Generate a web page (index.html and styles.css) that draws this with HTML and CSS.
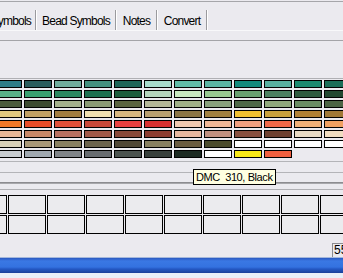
FILE: index.html
```html
<!DOCTYPE html>
<html lang="en">
<head>
  <meta charset="UTF-8" />
  <title>Palette</title>
  <link rel="stylesheet" href="styles.css">
</head>
<body>

<div class="win">
  <div class="line-top"></div>
  <div class="tabs">
    <div class="tab tab-sym">Symbols</div>
    <div class="tab tab-bead">Bead Symbols</div>
    <div class="tab tab-notes">Notes</div>
    <div class="tab tab-conv">Convert</div>
  </div>
  <div class="rule rule-light"></div>
  <div class="rule rule-tool"></div>
  <div class="rule rule-pal"></div>

  <div class="palette" id="palette"></div>

  <div class="rule rule-a"></div>
  <div class="rule rule-b"></div>
  <div class="rule rule-c"></div>
  <div class="rule rule-d"></div>

  <div class="boxes" id="boxes"></div>

  <div class="status">
    <span class="field">55</span>
  </div>
  <div class="taskbar"></div>
  <div class="desk"></div>

  <div class="tooltip">DMC&nbsp; 310, Black</div>
</div>

<script>
  const COLORS = [
    ["#2e7c88","#2a5c5c","#70ac9c","#44907e","#1f6658","#a8dccc","#62bca8","#5ab4a2","#138a7c","#58b0a0","#1c8a70","#1b6e58"],
    ["#58b088","#38a070","#2c8860","#1c7050","#1c5c3c","#b4d4bc","#c8e8c0","#98c890","#68a070","#4c8060","#2e5a3e","#224830"],
    ["#4a5a3c","#3c4a30","#a4b08c","#8a9a74","#5a6440","#b4b898","#a0b088","#88a07c","#4e6848","#90a87c","#6a8c64","#4c6444"],
    ["#e0c880","#c0a064","#a07c40","#f0e0b0","#d8b880","#b8a070","#8a7444","#a08040","#f0c030","#c8a03c","#b08034","#a07836"],
    ["#f07828","#e84c28","#e05038","#c84838","#e84040","#d83030","#f0c8b0","#f0b898","#f0a080","#f06848","#f0b078","#f0a060"],
    ["#e8b898","#c88868","#b87060","#a05848","#884838","#8c3c30","#e8b8a0","#c09080","#885040","#6e4030","#e8dac4","#f0dcc0"],
    ["#d8d0b8","#a89878","#888060","#6c644c","#504836","#888060","#6a5c40","#4a4a2c","#ffffff","#ffffff","#ffffff","#ffffff"],
    ["#c8ccd0","#a0a8b0","#808488","#686c70","#4c5450","#38403c","sel","#ffffff","#f8e818","#f06040",null,null]
  ];

  const palette = document.getElementById("palette");
  COLORS.forEach(row => {
    row.forEach(color => {
      const cell = document.createElement("div");
      if (color === null) {
        cell.className = "swatch empty";
      } else if (color === "sel") {
        cell.className = "swatch selected";
      } else {
        cell.className = "swatch";
        cell.style.background = color;
      }
      palette.appendChild(cell);
    });
  });

  const boxes = document.getElementById("boxes");
  for (let i = 0; i < 20; i++) {
    const box = document.createElement("div");
    box.className = "box";
    boxes.appendChild(box);
  }
</script>

</body>
</html>
```

FILE: styles.css
```css
body {
  margin: 0;
  background: #ebeaef;
  font-family: "Liberation Sans", Arial, sans-serif;
  font-size: 11px;
  color: #000;
  overflow: hidden;
}
.win {
  position: relative;
  width: 343px;
  height: 278px;
  overflow: hidden;
}
.line-top {
  height: 1px;
  margin-top: 1px;
  background: #a6a6aa;
}
.tabs {
  display: flex;
  margin: 8px 0 0 -30px;
  height: 20px;
}
.tab {
  line-height: 20px;
  padding-top: 1px;
  box-sizing: border-box;
  text-align: center;
  font-size: 12px;
  letter-spacing: -0.8px;
  border-right: 1px solid #9a9a9e;
  box-shadow: 1px 0 0 #ffffff;
}
.tab-sym { width: 66px; text-align: right; padding-right: 4px; }
.tab-bead { width: 80px; padding-left: 1px; }
.tab-notes { width: 41px; padding-left: 1px; }
.tab-conv { width: 50px; padding-left: 1px; }

.rule {
  height: 1px;
}
.rule-light {
  background: #f8f8fa;
}
.rule-tool {
  margin-top: 9px;
  background: #a4a4a8;
}
.rule-pal {
  margin-top: 37px;
  background: #b0b0b4;
}
.palette {
  display: grid;
  grid-template-columns: repeat(12, 28px);
  grid-auto-rows: 8px;
  gap: 2px;
  margin: 1px 0 0 -6px;
}
.swatch {
  border: 1px solid #000;
  box-sizing: border-box;
}
.swatch.empty {
  border: none;
}
.swatch.selected {
  background: #1c2a22;
}
.rule-a {
  margin-top: 3px;
  background: #b4b4b8;
}
.rule-b {
  margin-top: 10px;
  background: #b4b4b8;
}
.rule-c {
  margin-top: 9px;
  height: 2px;
  background: linear-gradient(#8c8c90 0 1px, #a8a8ac 1px);
}
.rule-d {
  margin-top: 5px;
  background: #b0b0b4;
}
.boxes {
  display: grid;
  grid-template-columns: repeat(10, 38px);
  grid-auto-rows: 19px;
  gap: 1px;
  margin: 5px 0 0 -31px;
}
.box {
  border: 1px solid #000;
  box-sizing: border-box;
  background: #ebebee;
}
.status {
  display: flex;
  justify-content: flex-end;
  align-items: flex-end;
  height: 23px;
}
.field {
  width: 22px;
  height: 14px;
  margin-right: -11px;
  box-sizing: border-box;
  border-top: 1px solid #8c8c90;
  border-left: 1px solid #8c8c90;
  line-height: 13px;
  padding-left: 1px;
  font-size: 12px;
}
.taskbar {
  height: 16px;
  background: linear-gradient(#a4b8dc 0 1px, #2a58c0 1px, #3a78e4 4px, #3472e0 10px, #2458c4 12px, #1a3e98 16px);
}
.desk {
  height: 6px;
  background: #e8eef8;
}
.tooltip {
  position: absolute;
  left: 193px;
  top: 169px;
  height: 16px;
  padding: 0 2px;
  line-height: 15px;
  box-sizing: border-box;
  background: #ffffe1;
  border: 1px solid #000;
  font-size: 11px;
  letter-spacing: -0.4px;
  white-space: nowrap;
}
```
